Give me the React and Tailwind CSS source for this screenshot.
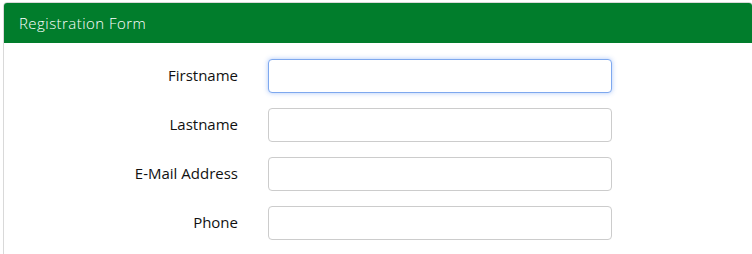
export default function App() {
  const fields = ["Firstname", "Lastname", "E-Mail Address", "Phone"];
  return (
    <div className="w-[752px] h-[254px] bg-white overflow-hidden pt-[2px] pl-[3px]">
      <div className="w-[750px] h-[260px] border border-[#d9d9d9] rounded-t-[4px] bg-white">
        <div className="h-[40px] bg-[#017d2c] rounded-t-[3px] flex items-center pl-[15px] text-white text-[15px] font-['Open_Sans',sans-serif] font-light tracking-[0.45px]">
          Registration Form
        </div>
        <div className="pt-[16px] flex flex-col gap-[15px]">
          {fields.map((f, i) => (
            <div key={f} className="flex items-center gap-[30px]">
              <label className="w-[234px] pb-[2px] text-right text-[15px] text-[#111] font-['Open_Sans',sans-serif] font-medium">
                {f}
              </label>
              <input
                className={
                  i === 0
                    ? "w-[344px] h-[34px] rounded-[4px] border border-[#7ea8ee] shadow-[0_0_5px_rgba(70,130,240,0.45)] outline-none bg-white"
                    : "w-[344px] h-[34px] rounded-[4px] border border-[#cccccc] outline-none bg-white"
                }
              />
            </div>
          ))}
        </div>
      </div>
    </div>
  );
}
